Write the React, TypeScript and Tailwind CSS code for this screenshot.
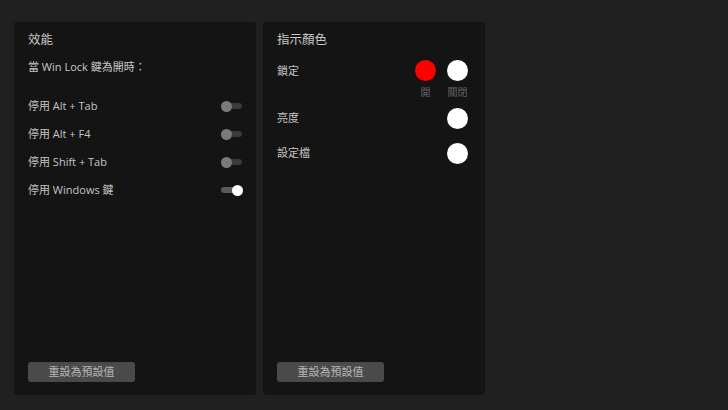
import React from "react";

const font = { fontFamily: '"Open Sans", "Noto Sans CJK TC", sans-serif' };

function Toggle({ on }: { on?: boolean }) {
  return (
    <div className="relative w-[22px] h-[11px] flex items-center">
      <div className={`w-[21px] h-[6px] rounded-full ${on ? "bg-[#5a5a5a]" : "bg-[#3a3a3a]"}`} />
      <div
        className={`absolute top-0 w-[11px] h-[11px] rounded-full ${on ? "left-[11px] bg-white" : "left-0 bg-[#7a7a7a]"}`}
      />
    </div>
  );
}

function Row({ label, on }: { label: string; on?: boolean }) {
  return (
    <div className="h-[28px] flex items-center justify-between pr-[13px]">
      <span className="text-[11px] text-[#c4c4c4]">{label}</span>
      <Toggle on={on} />
    </div>
  );
}

function ResetButton() {
  return (
    <button className="w-[107px] h-[20px] rounded-[3px] bg-[#4a4a4a] text-[11px] text-[#b8b8b8] flex items-center justify-center">
      重設為預設值
    </button>
  );
}

export default function App() {
  return (
    <div className="w-[728px] h-[410px] bg-[#202020] pt-[22px] pl-[14px] flex gap-[7px]" style={font}>
      <div className="w-[242px] h-[373px] bg-[#141414] rounded-[3px] flex flex-col pl-[14px] pt-[9px] pb-[13px]">
        <div className="h-[18px] leading-[18px] text-[12.5px] text-[#c8c8c8]">效能</div>
        <div className="mt-[9px] h-[18px] leading-[18px] text-[11px] text-[#c8c8c8]">當 Win Lock 鍵為開時：</div>
        <div className="mt-[16px] flex flex-col">
          <Row label="停用 Alt + Tab" />
          <Row label="停用 Alt + F4" />
          <Row label="停用 Shift + Tab" />
          <Row label="停用 Windows 鍵" on />
        </div>
        <div className="mt-auto">
          <ResetButton />
        </div>
      </div>
      <div className="w-[222px] h-[373px] bg-[#141414] rounded-[3px] flex flex-col pl-[14px] pr-[17px] pt-[9px] pb-[13px]">
        <div className="h-[18px] leading-[18px] text-[12.5px] text-[#c8c8c8]">指示顏色</div>
        <div className="mt-[11px] flex justify-between">
          <span className="text-[11px] text-[#c4c4c4] h-[21px] leading-[21px]">鎖定</span>
          <div className="flex gap-[11px]">
            <div className="flex flex-col items-center w-[21px]">
              <div className="w-[21px] h-[21px] rounded-full bg-[#ff0000]" />
              <span className="mt-[4px] text-[10px] leading-[14px] text-[#666] whitespace-nowrap">開</span>
            </div>
            <div className="flex flex-col items-center w-[21px]">
              <div className="w-[21px] h-[21px] rounded-full bg-white" />
              <span className="mt-[4px] text-[10px] leading-[14px] text-[#666] whitespace-nowrap">關閉</span>
            </div>
          </div>
        </div>
        <div className="mt-[9px] flex justify-between items-center h-[21px]">
          <span className="text-[11px] text-[#c4c4c4]">亮度</span>
          <div className="w-[21px] h-[21px] rounded-full bg-white" />
        </div>
        <div className="mt-[14px] flex justify-between items-center h-[21px]">
          <span className="text-[11px] text-[#c4c4c4]">設定檔</span>
          <div className="w-[21px] h-[21px] rounded-full bg-white" />
        </div>
        <div className="mt-auto">
          <ResetButton />
        </div>
      </div>
    </div>
  );
}
